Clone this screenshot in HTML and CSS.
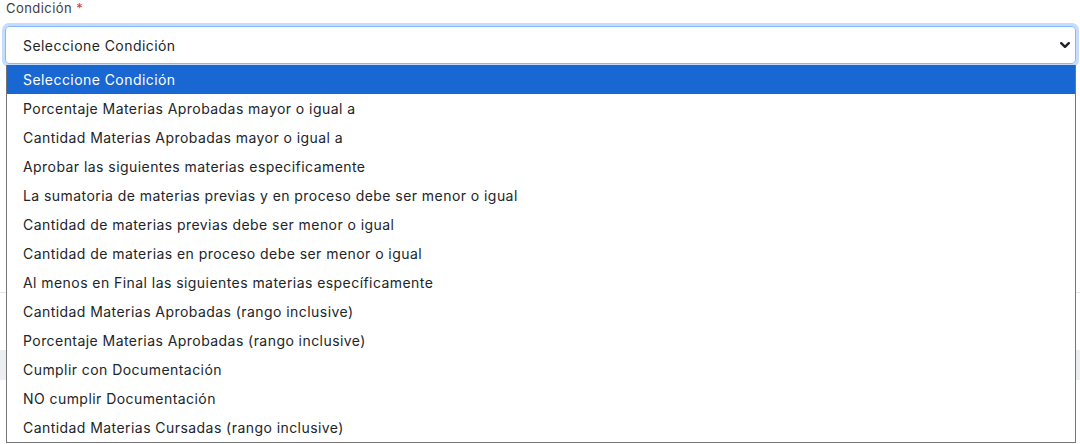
FILE: index.html
```html
<!DOCTYPE html>
<html lang="es">
<head>
<meta charset="utf-8">
<title>Condición</title>
<link rel="stylesheet" href="styles.css">
</head>
<body>
<div class="page">
  <div class="field">
    <label class="label">Condición <span class="req">*</span></label>
    <div class="select">
      <span class="select-text">Seleccione Condición</span>
      <svg class="chev" width="10" height="6" viewBox="0 0 10 6"><path d="M1.2 1.2l3.8 3.6 3.8-3.6" fill="none" stroke="#1f2328" stroke-width="2.4" stroke-linecap="round" stroke-linejoin="round"/></svg>
    </div>
  </div>
  <div class="section"></div>
  <div class="bar"></div>

  <ul class="dropdown">
    <li class="opt active">Seleccione Condición</li>
    <li class="opt">Porcentaje Materias Aprobadas mayor o igual a</li>
    <li class="opt">Cantidad Materias Aprobadas mayor o igual a</li>
    <li class="opt">Aprobar las siguientes materias especificamente</li>
    <li class="opt">La sumatoria de materias previas y en proceso debe ser menor o igual</li>
    <li class="opt">Cantidad de materias previas debe ser menor o igual</li>
    <li class="opt">Cantidad de materias en proceso debe ser menor o igual</li>
    <li class="opt">Al menos en Final las siguientes materias específicamente</li>
    <li class="opt">Cantidad Materias Aprobadas (rango inclusive)</li>
    <li class="opt">Porcentaje Materias Aprobadas (rango inclusive)</li>
    <li class="opt">Cumplir con Documentación</li>
    <li class="opt">NO cumplir Documentación</li>
    <li class="opt">Cantidad Materias Cursadas (rango inclusive)</li>
  </ul>
</div>
</body>
</html>
```
FILE: styles.css
```css
* { box-sizing: border-box; }
html, body { margin: 0; padding: 0; background: #fff; }
body { font-family: Inter, "Open Sans", sans-serif; color: #212529; letter-spacing: 0.44px; }
.page { position: relative; width: 1080px; height: 444px; overflow: hidden; }
.field { padding: 0 5px 0 5px; }
.label { display: block; height: 26px; padding: 0 0 0 1px; font-size: 13px; line-height: 17px; color: #3d3d3d; }
.req { color: #dc3545; }
.select {
  display: flex; align-items: center; justify-content: space-between;
  width: 1071px; height: 38px;
  padding: 0 5px 0 17px;
  border: 1px solid #86b7fe; border-radius: 4px;
  box-shadow: 0 0 0 3px #c5dcfd;
  font-size: 14px; color: #212529;
}
.chev { display: block; }
.section { height: 229px; border-bottom: 1px solid #e3e6ea; }
.bar { margin-top: 57px; height: 30px; background: #eceef1; }
.dropdown {
  position: absolute; left: 6px; top: 65px;
  width: 1070px; margin: 0; padding: 0; list-style: none;
  background: #fff; border: 1px solid #767676; border-top: 0;
}
.opt { height: 29px; line-height: 29px; padding-left: 16px; font-size: 14px; color: #212529; white-space: nowrap; }
.opt.active { background: #1967d2; color: #fff; }
```
